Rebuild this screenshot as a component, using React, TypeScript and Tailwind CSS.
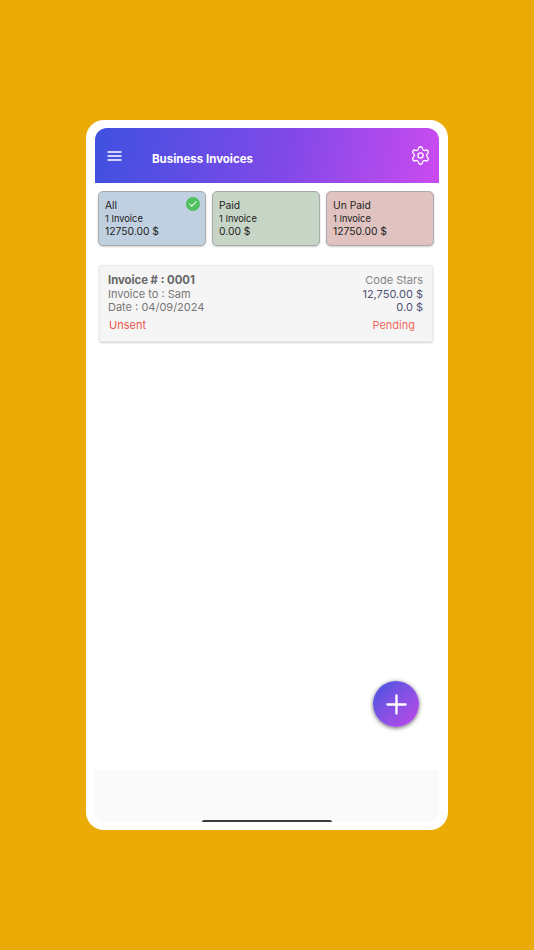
import { Check, Plus, Settings } from "lucide-react";

type Summary = {
  title: string;
  count: string;
  total: string;
  color: string;
  selected?: boolean;
};

const summaries: Summary[] = [
  { title: "All", count: "1 Invoice", total: "12750.00 $", color: "bg-[#c0d0e1]", selected: true },
  { title: "Paid", count: "1 Invoice", total: "0.00 $", color: "bg-[#c7d5c6]" },
  { title: "Un Paid", count: "1 Invoice", total: "12750.00 $", color: "bg-[#e0c2c0]" },
];

function SummaryCard({ title, count, total, color, selected }: Summary) {
  return (
    <div className={`relative h-[55px] flex-1 rounded-[5px] border border-[#a9abab] px-[6px] pt-[7px] shadow-[0_1px_2px_rgba(0,0,0,0.2)] ${color}`}>
      <p className="text-[10.3px] leading-[13px] text-[#222]">{title}</p>
      <p className="text-[9.3px] leading-[13px] text-[#222]">{count}</p>
      <p className="text-[10.3px] leading-[13px] text-[#222]">{total}</p>
      {selected && (
        <span className="absolute right-[5px] top-[5px] flex h-[14px] w-[14px] items-center justify-center rounded-full bg-[#50c15f]">
          <Check size={10} strokeWidth={2.5} className="text-white" />
        </span>
      )}
    </div>
  );
}

export default function App() {
  return (
    <div className="h-[950px] w-[534px] bg-[#eaab07] pl-[86px] pt-[120px] font-['Inter',sans-serif]">
      <div className="relative flex h-[710px] w-[361.5px] flex-col rounded-[18px] bg-white pb-[8px] pl-[9px] pr-[8.5px] pt-[8px]">
        <header className="flex h-[55px] shrink-0 items-center rounded-t-[12px] bg-[linear-gradient(100deg,#3f51e0,#8049e8_55%,#cb4bf0)] pl-[12px] pr-[8px]">
          <svg width="15" height="10" viewBox="0 0 15 10" className="shrink-0 text-white">
            <path d="M0.5 1h14M0.5 5h14M0.5 9h14" stroke="currentColor" strokeWidth="1.4" fill="none" />
          </svg>
          <h1 className="ml-[30px] mt-[8px] flex-1 text-[11.5px] font-bold text-white">Business Invoices</h1>
          <Settings size={21} strokeWidth={1.5} className="text-white" />
        </header>

        <div className="flex gap-[6px] pl-[3px] pr-[5px] pt-[8px]">
          {summaries.map((item) => (
            <SummaryCard key={item.title} {...item} />
          ))}
        </div>

        <div className="ml-[4px] mr-[6px] mt-[19px] flex h-[77px] justify-between rounded-[2px] border border-[#e9e9e9] bg-[#f5f5f5] pl-[8px] pr-[9px] pt-[8px] shadow-[0_1px_2px_rgba(0,0,0,0.18)]">
          <div className="text-[11px] leading-[13.5px] text-[#757575]">
            <p className="text-[11.3px] font-bold text-[#666]">Invoice # : 0001</p>
            <p>Invoice to : Sam</p>
            <p>Date : 04/09/2024</p>
            <p className="ml-[1px] mt-[4px] text-[#e9554c]">Unsent</p>
          </div>
          <div className="text-right text-[11px] leading-[13.5px] text-[#4f5374]">
            <p className="text-[#858585]">Code Stars</p>
            <p>12,750.00 $</p>
            <p>0.0 $</p>
            <p className="mr-[8px] mt-[4px] text-[#ee6a60]">Pending</p>
          </div>
        </div>

        <div className="flex-1" />

        <button className="absolute bottom-[103px] right-[28.5px] flex h-[46px] w-[46px] items-center justify-center rounded-full bg-gradient-to-br from-[#3f51e0] to-[#c045e8] shadow-[0_1px_4px_rgba(0,0,0,0.6)]">
          <Plus size={31} strokeWidth={1.8} className="text-white" />
        </button>

        <div className="h-[52px] shrink-0 rounded-b-[10px] bg-[#fafafa]" />
        <div className="absolute bottom-[8px] left-[116px] h-[2px] w-[130px] rounded-t-[2px] bg-[#3c3c3c]" />
      </div>
    </div>
  );
}
